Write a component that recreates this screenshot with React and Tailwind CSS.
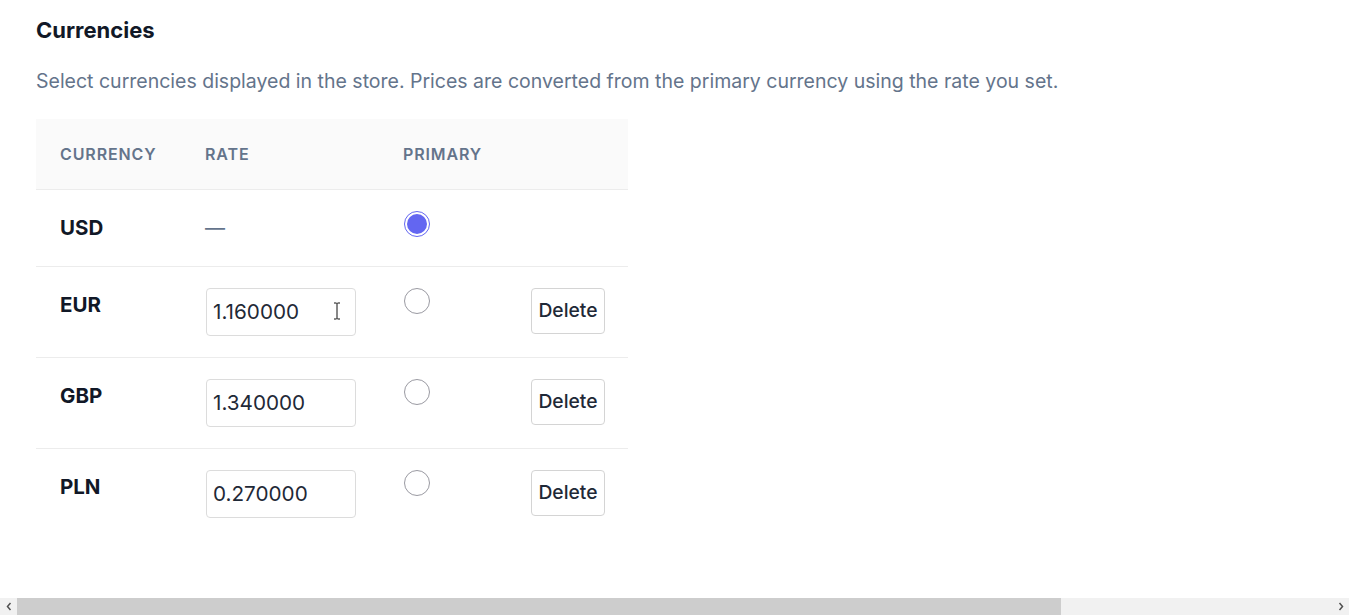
import React from "react";

function Radio({ checked }) {
  if (checked) {
    return (
      <span className="flex h-[26px] w-[26px] items-center justify-center rounded-full border-[1.5px] border-[#6366f1] bg-white">
        <span className="h-[20px] w-[20px] rounded-full bg-[#6366f1]" />
      </span>
    );
  }
  return <span className="block h-[26px] w-[26px] rounded-full border-[1.5px] border-[#9a9aa2] bg-white" />;
}

const rows = [
  { code: "USD", rate: null, primary: true },
  { code: "EUR", rate: "1.160000", primary: false, cursor: true },
  { code: "GBP", rate: "1.340000", primary: false },
  { code: "PLN", rate: "0.270000", primary: false },
];

function Scrollbar() {
  return (
    <div className="flex h-[17px] w-full shrink-0 bg-[#f1f1f1]">
      <div className="flex w-[17px] items-center justify-center">
        <svg width="6" height="9" viewBox="0 0 6 9">
          <path d="M4.5 1L1.5 4.5L4.5 8" fill="none" stroke="#505050" strokeWidth="1.5" />
        </svg>
      </div>
      <div className="flex flex-1">
        <div className="h-full w-[1044px] bg-[#cdcdcd]" />
      </div>
      <div className="flex w-[17px] items-center justify-center">
        <svg width="6" height="9" viewBox="0 0 6 9">
          <path d="M1.5 1L4.5 4.5L1.5 8" fill="none" stroke="#505050" strokeWidth="1.5" />
        </svg>
      </div>
    </div>
  );
}

export default function App() {
  return (
    <div
      className="flex h-[615px] w-full flex-col overflow-hidden bg-white"
      style={{ fontFamily: "Inter, 'Noto Sans', sans-serif" }}
    >
      <div className="flex-1 px-9 pt-[15px]">
        <h2 className="text-[22px] font-bold leading-[30px] text-[#111827]">Currencies</h2>
        <p className="mt-[22px] whitespace-nowrap text-[19.5px] leading-[28px] text-[#64748b]">
          Select currencies displayed in the store. Prices are converted from the primary currency using the rate you set.
        </p>
        <table className="mt-[24px] w-[592px] table-fixed border-collapse">
          <colgroup>
            <col className="w-[145px]" />
            <col className="w-[198px]" />
            <col className="w-[128px]" />
            <col className="w-[121px]" />
          </colgroup>
          <thead>
            <tr className="h-[70px] border-b border-[#ececec] bg-[#fafafa]">
              <th className="px-6 text-left align-middle text-[16px] font-semibold uppercase tracking-[0.055em] text-[#64748b]">Currency</th>
              <th className="px-6 text-left align-middle text-[16px] font-semibold uppercase tracking-[0.055em] text-[#64748b]">Rate</th>
              <th className="px-6 text-left align-middle text-[16px] font-semibold uppercase tracking-[0.055em] text-[#64748b]">Primary</th>
              <th className="px-6" />
            </tr>
          </thead>
          <tbody>
            {rows.map((r, i) => (
              <tr
                key={r.code}
                className={`${r.primary ? "h-[77px]" : "h-[91px]"} ${i < rows.length - 1 ? "border-b border-[#ececec]" : ""}`}
              >
                <td className="px-6 pt-[23px] align-top text-[20.5px] font-bold leading-[30px] text-[#111827]">{r.code}</td>
                <td className="px-6 pt-[21px] align-top">
                  {r.rate === null ? (
                    <span className="block pt-[2px] text-[20px] leading-[30px] text-[#64748b]">—</span>
                  ) : (
                    <div className="relative ml-[1px] h-[48px] w-[150px]">
                      <input
                        readOnly
                        value={r.rate}
                        className="h-[48px] w-[150px] rounded-[4px] border border-[#dcdcdc] bg-white px-[6px] text-[20.7px] text-[#1f2937] outline-none"
                        style={{ fontFamily: "Inter, sans-serif" }}
                      />
                      {r.cursor && (
                        <svg className="pointer-events-none absolute left-[126px] top-[14px]" width="10" height="18" viewBox="0 0 10 18">
                          <path d="M2 1h2.5l.5.5.5-.5H8M5 1.5v15M2 17h2.5l.5-.5.5.5H8" fill="none" stroke="#111" strokeWidth="1" />
                        </svg>
                      )}
                    </div>
                  )}
                </td>
                <td className="px-6 pt-[21px] align-top">
                  <div className="ml-[1px]">
                    <Radio checked={r.primary} />
                  </div>
                </td>
                <td className="px-6 pt-[21px] align-top">
                  {!r.primary && (
                    <button className="h-[46px] w-[74px] rounded-[4px] border border-[#d4d4d4] bg-white text-[19.3px] font-medium text-[#1f2937]">
                      Delete
                    </button>
                  )}
                </td>
              </tr>
            ))}
          </tbody>
        </table>
      </div>
      <Scrollbar />
    </div>
  );
}
